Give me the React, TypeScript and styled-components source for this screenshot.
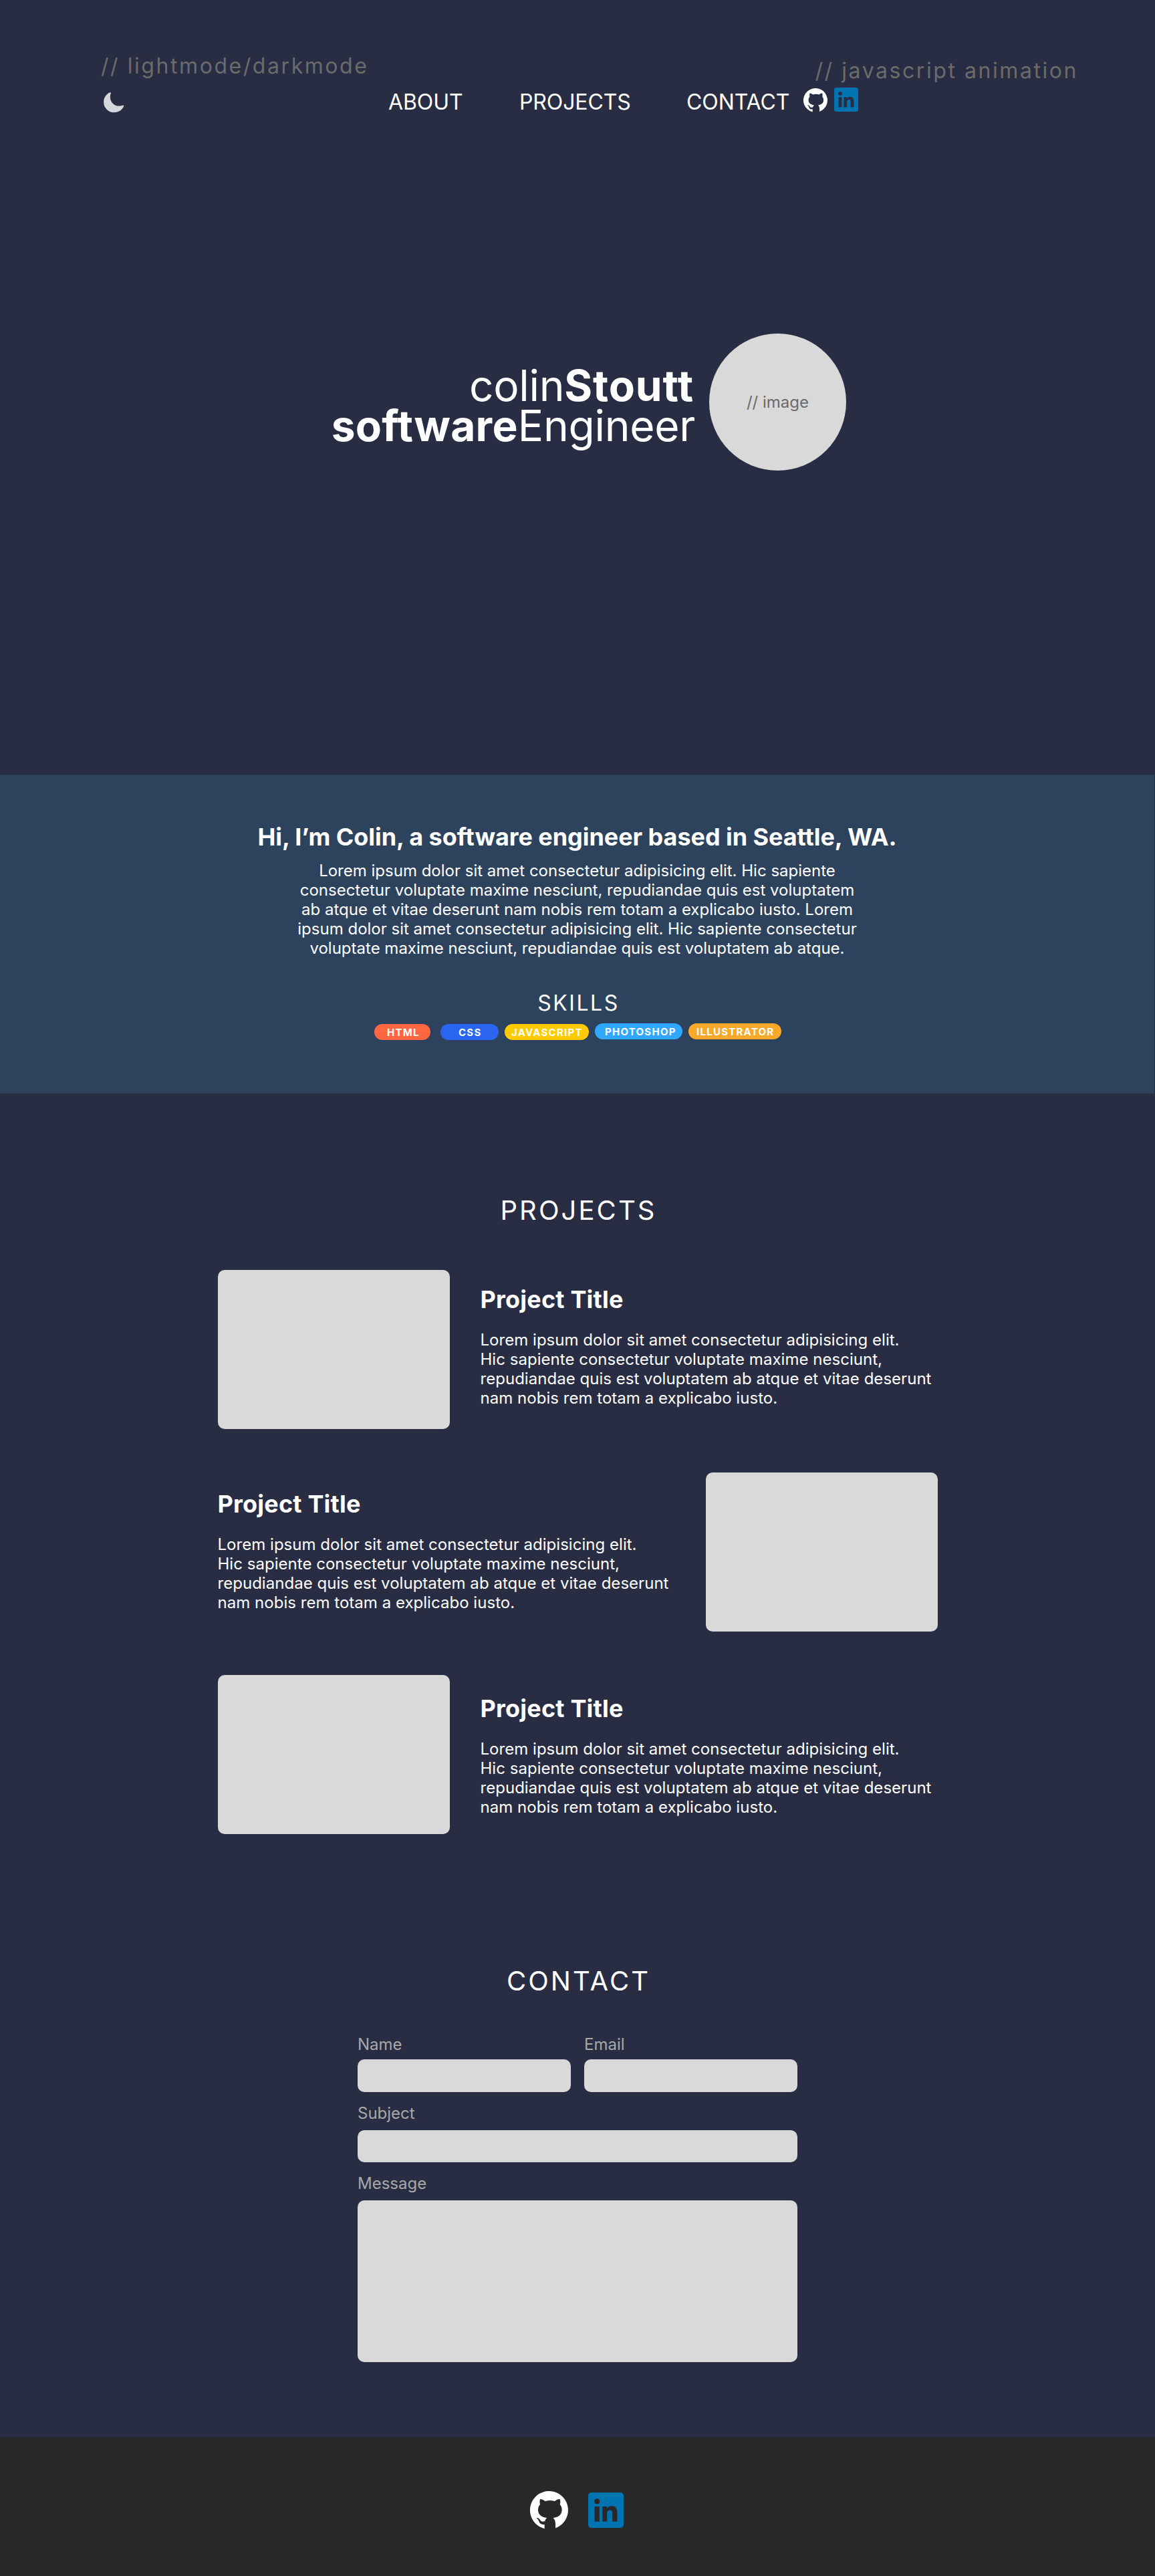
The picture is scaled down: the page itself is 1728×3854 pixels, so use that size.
import React from "react";
import styled, { createGlobalStyle } from "styled-components";
import { IoMoon } from "react-icons/io5";

const GlobalStyle = createGlobalStyle`
  *, *::before, *::after { box-sizing: border-box; }
  body { margin: 0; background: #282d43; }
  h1, h2, h3, p { margin: 0; font-weight: 400; }
`;

const Page = styled.div`
  width: 1728px;
  height: 3854px;
  display: flex;
  flex-direction: column;
  overflow: hidden;
  background: #282d43;
  color: #fff;
  font-family: Inter, "Liberation Sans", sans-serif;
  font-size: 24px;
  line-height: 29px;
`;

const Header = styled.header`
  height: 1159px;
  flex: none;
  display: flex;
  flex-direction: column;
`;

const Notes = styled.div`
  display: flex;
  justify-content: space-between;
  padding: 79px 115px 0 151px;
  height: 133px;
`;

const Note = styled.span<{ $drop?: number }>`
  padding-top: ${(p) => p.$drop ?? 0}px;
  font-size: 32px;
  line-height: 39px;
  letter-spacing: 0.08em;
  color: #6b6b6b;
  white-space: nowrap;
`;

const Nav = styled.nav`
  display: flex;
  height: 39px;
  font-size: 32px;
  line-height: 39px;
  letter-spacing: -0.1px;
`;

const ThemeToggle = styled.span`
  display: flex;
  margin: 3px 0 0 153px;
  width: 428px;
  color: #d6d7dc;
`;

const NavLink = styled.a<{ $width: number }>`
  width: ${(p) => p.$width}px;
`;

const NavIcon = styled.span<{ $lift: number; $gap: number }>`
  display: flex;
  margin: -${(p) => p.$lift}px ${(p) => p.$gap}px 0 0;
`;

const Hero = styled.div`
  display: flex;
  justify-content: flex-end;
  margin: 327px 462px 0 0;
`;

const HeroName = styled.h1`
  padding-top: 48px;
  margin-right: 21px;
  font-size: 64px;
  line-height: 60px;
  text-align: right;
`;

const NameLine = styled.span<{ $indent?: number }>`
  display: block;
  padding-right: ${(p) => p.$indent ?? 0}px;
`;

const HeroPart = styled.span<{ $bold?: boolean; $spacing: number }>`
  font-weight: ${(p) => (p.$bold ? 700 : 400)};
  letter-spacing: ${(p) => p.$spacing}px;
`;

const Avatar = styled.div`
  width: 205px;
  height: 205px;
  border-radius: 50%;
  background: #d9d9d9;
  color: #6b6b6b;
  display: flex;
  align-items: center;
  justify-content: center;
`;

const About = styled.section`
  width: 1727px;
  height: 477px;
  flex: none;
  background: #2d425d;
  display: flex;
  flex-direction: column;
  align-items: center;
  padding-top: 71px;
`;

const Title = styled.h2<{ $spacing: number }>`
  font-size: 36px;
  font-weight: 700;
  line-height: 44px;
  letter-spacing: ${(p) => p.$spacing}px;
`;

const Bio = styled.p`
  margin-top: 14px;
  text-align: center;
`;

const SkillsTitle = styled.h3`
  margin-top: 48px;
  padding-left: 4px;
  font-size: 32px;
  line-height: 39px;
  letter-spacing: 0.08em;
`;

const Skills = styled.div`
  display: flex;
  align-self: flex-start;
  margin: 12px 0 0 560px;
`;

const Badge = styled.span<{ $color: string; $width: number; $gap: number; $inset: number; $lift?: boolean }>`
  width: ${(p) => p.$width}px;
  height: 24px;
  margin-right: ${(p) => p.$gap}px;
  margin-top: ${(p) => (p.$lift ? -1 : 0)}px;
  padding-left: ${(p) => p.$inset}px;
  border-radius: 12px;
  background: ${(p) => p.$color};
  font-size: 15px;
  font-weight: 700;
  line-height: 25px;
  letter-spacing: 1.25px;
  white-space: nowrap;
`;

const Section = styled.section<{ $top: number; $height: number }>`
  flex: none;
  height: ${(p) => p.$height}px;
  padding-top: ${(p) => p.$top}px;
  display: flex;
  flex-direction: column;
  align-items: center;
`;

const SectionTitle = styled.h2`
  font-size: 40px;
  line-height: 48px;
  letter-spacing: 0.077em;
  padding-left: 3px;
`;

const ProjectList = styled.div`
  width: 1077px;
  margin-top: 65px;
  display: flex;
  flex-direction: column;
  gap: 65px;
`;

const Project = styled.article<{ $reverse?: boolean }>`
  display: flex;
  flex-direction: ${(p) => (p.$reverse ? "row-reverse" : "row")};
  justify-content: ${(p) => (p.$reverse ? "space-between" : "flex-start")};
  gap: 46px;
`;

const Thumb = styled.div`
  width: 347px;
  height: 238px;
  flex: none;
  border-radius: 10px;
  background: #d9d9d9;
`;

const ProjectText = styled.div<{ $top: number }>`
  padding-top: ${(p) => p.$top}px;
  white-space: nowrap;
  letter-spacing: 0.03px;
  p { margin-top: 24px; }
`;

const Form = styled.form`
  width: 658px;
  margin-top: 56px;
  display: flex;
  flex-direction: column;
`;

const FieldRow = styled.div`
  display: flex;
  gap: 20px;
`;

const Field = styled.label<{ $top?: number; $gap: number }>`
  flex: 1;
  margin-top: ${(p) => p.$top ?? 0}px;
  display: flex;
  flex-direction: column;
  gap: ${(p) => p.$gap}px;
  color: #a8a8a8;
`;

const Input = styled.input<{ $height: number }>`
  width: 100%;
  height: ${(p) => p.$height}px;
  border: 0;
  border-radius: 10px;
  background: #d9d9d9;
`;

const TextArea = styled.textarea`
  width: 100%;
  height: 242px;
  border: 0;
  border-radius: 10px;
  background: #d9d9d9;
  resize: none;
`;

const Footer = styled.footer`
  flex: 1;
  background: #282828;
  display: flex;
  justify-content: center;
  padding: 80px 2px 0 0;
  gap: 30px;
`;

const FooterLogo = styled.span<{ $top?: number }>`
  display: flex;
  height: 60px;
  padding-top: ${(p) => p.$top ?? 0}px;
`;

function GitHubMark({ size }: { size: number }) {
  return (
    <svg width={size} height={size} viewBox="0 0 171 171" fill="#fff">
      <path d="M65 168.5A85.5 85.5 0 1 1 114 166V146C114 134 110 126 104 120C128 117 143 106 143 84C143 74 140 67 134 60C137 52 136 43 134 36C127 35 119 39 111 45C96 41 83 41 68 45C59 39 51 35 45 36C43 44 43 52 45 60C39 67 36 74 36 84C36 106 51 117 76 120C71 124 68 129 67 134C60 138 50 138 45 129C41 122 35 119 29 120C28 122 38 126 40 136C44 149 54 151 65 149Z" />
    </svg>
  );
}

function LinkedInMark({ size }: { size: number }) {
  return (
    <svg width={size} height={size} viewBox="0 0 158 158" fill="#0073b1">
      <path
        fillRule="evenodd"
        d="M14 0H144A14 14 0 0 1 158 14V144A14 14 0 0 1 144 158H14A14 14 0 0 1 0 144V14A14 14 0 0 1 14 0ZM39.5 27.7A12.3 12.3 0 1 0 39.5 52.3A12.3 12.3 0 1 0 39.5 27.7ZM28.5 62.5V130H50V62.5ZM63 62.5V130H84V96.5C84 88 86 79 97 79C107.500 79 108 88 108 97V130H129.500V92C129.500 73 124 60 104 60C94 60 86 66 83.500 71.500V62.500Z"
      />
    </svg>
  );
}

const skills = [
  { name: "HTML", color: "#ff6740", width: 84, gap: 15, inset: 19 },
  { name: "CSS", color: "#2965f1", width: 87, gap: 9, inset: 27 },
  { name: "JAVASCRIPT", color: "#ffca00", width: 126, gap: 9, inset: 10 },
  { name: "PHOTOSHOP", color: "#31a8ff", width: 131, gap: 9, inset: 15, lift: true },
  { name: "ILLUSTRATOR", color: "#f9a829", width: 139, gap: 0, inset: 12, lift: true },
];

const projects = [
  { id: 1, top: 22, reverse: false },
  { id: 2, top: 25, reverse: true },
  { id: 3, top: 28, reverse: false },
];

export default function App() {
  return (
    <Page>
      <GlobalStyle />
      <Header>
        <Notes>
          <Note>// lightmode/darkmode</Note>
          <Note $drop={7}>// javascript animation</Note>
        </Notes>
        <Nav>
          <ThemeToggle><IoMoon size={34.4} /></ThemeToggle>
          <NavLink $width={196}>ABOUT</NavLink>
          <NavLink $width={250}>PROJECTS</NavLink>
          <NavLink $width={175}>CONTACT</NavLink>
          <NavIcon $lift={1} $gap={10}><GitHubMark size={36} /></NavIcon>
          <NavIcon $lift={2} $gap={0}><LinkedInMark size={36} /></NavIcon>
        </Nav>
        <Hero>
          <HeroName>
            <NameLine $indent={2}>
              <HeroPart $spacing={-0.3}>colin</HeroPart>
              <HeroPart $bold $spacing={0.9}>Stoutt</HeroPart>
            </NameLine>
            <NameLine>
              <HeroPart $bold $spacing={0.3}>software</HeroPart>
              <HeroPart $spacing={-0.3}>Engineer</HeroPart>
            </NameLine>
          </HeroName>
          <Avatar>// image</Avatar>
        </Hero>
      </Header>

      <About>
        <Title $spacing={-0.06}>Hi, I’m Colin, a software engineer based in Seattle, WA.</Title>
        <Bio>
          Lorem ipsum dolor sit amet consectetur adipisicing elit. Hic sapiente<br />
          consectetur voluptate maxime nesciunt, repudiandae quis est voluptatem<br />
          ab atque et vitae deserunt nam nobis rem totam a explicabo iusto. Lorem<br />
          ipsum dolor sit amet consectetur adipisicing elit. Hic sapiente consectetur<br />
          voluptate maxime nesciunt, repudiandae quis est voluptatem ab atque.
        </Bio>
        <SkillsTitle>SKILLS</SkillsTitle>
        <Skills>
          {skills.map((s) => (
            <Badge key={s.name} $color={s.color} $width={s.width} $gap={s.gap} $inset={s.inset} $lift={s.lift}>
              {s.name}
            </Badge>
          ))}
        </Skills>
      </About>

      <Section $top={151} $height={1108}>
        <SectionTitle>PROJECTS</SectionTitle>
        <ProjectList>
          {projects.map((p) => (
            <Project key={p.id} $reverse={p.reverse}>
              <Thumb />
              <ProjectText $top={p.top}>
                <Title $spacing={0.2}>Project Title</Title>
                <p>
                  Lorem ipsum dolor sit amet consectetur adipisicing elit.<br />
                  Hic sapiente consectetur voluptate maxime nesciunt,<br />
                  repudiandae quis est voluptatem ab atque et vitae deserunt<br />
                  nam nobis rem totam a explicabo iusto.
                </p>
              </ProjectText>
            </Project>
          ))}
        </ProjectList>
      </Section>

      <Section $top={196} $height={903}>
        <SectionTitle>CONTACT</SectionTitle>
        <Form>
          <FieldRow>
            <Field $gap={8}>Name<Input $height={49} /></Field>
            <Field $gap={8}>Email<Input $height={49} /></Field>
          </FieldRow>
          <Field $top={17} $gap={11}>Subject<Input $height={48} /></Field>
          <Field $top={17} $gap={11}>Message<TextArea /></Field>
        </Form>
      </Section>

      <Footer>
        <FooterLogo><GitHubMark size={57} /></FooterLogo>
        <FooterLogo $top={2}><LinkedInMark size={53} /></FooterLogo>
      </Footer>
    </Page>
  );
}
